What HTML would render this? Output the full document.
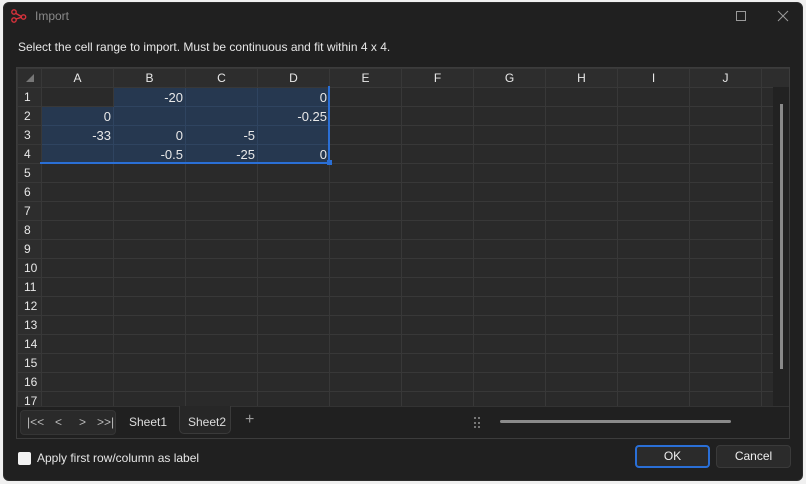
<!DOCTYPE html>
<html><head><style>
*{box-sizing:border-box;margin:0;padding:0}
body{width:806px;height:484px;background:#f0f0f0;font-family:"Liberation Sans",sans-serif;overflow:hidden;position:relative}
.win{position:absolute;left:3px;top:2px;width:800px;height:479px;background:#202020;border-radius:6px;border:1px solid #2c2c2c}
.abs{position:absolute}
.title{left:35px;top:9px;color:#8a8a8a;font-size:12px}
.msg{left:18px;top:40px;color:#e6e6e6;font-size:12px}
.grid{left:16px;top:67px;width:774px;height:372px;border:1px solid #3c3c3c;background:#2a2a2a;overflow:hidden}
table{border-collapse:collapse;table-layout:fixed;position:absolute;left:0;top:0;width:816px}
td{height:19px;border:1px solid #383838;font-size:13px;color:#e8e8e8;text-align:right;padding:0 2px;white-space:nowrap;overflow:hidden;line-height:17px}
td.h{background:#2d2d2d;text-align:center;font-size:12px}
td.r{background:#2d2d2d;text-align:left;padding-left:6px;font-size:12px}
td.s{background:#263850;border-color:#2f4460}
</style></head><body>
<div class="win"></div>
<svg class="abs" style="left:11px;top:9px" width="16" height="14" viewBox="0 0 16 14"><circle cx="3" cy="3" r="2.2" fill="none" stroke="#d8323c" stroke-width="1.4"/><circle cx="3" cy="11" r="2.2" fill="none" stroke="#d8323c" stroke-width="1.4"/><circle cx="12.5" cy="8" r="2.2" fill="none" stroke="#d8323c" stroke-width="1.4"/><path d="M5 4.5 L10.3 7.5 M5 10 L10.3 8.3" stroke="#d8323c" stroke-width="1.4"/></svg>
<div class="abs title">Import</div>
<div class="abs" style="left:736px;top:11px;width:10px;height:10px;border:1px solid #9a9a9a"></div>
<svg class="abs" style="left:777px;top:10px" width="12" height="12"><path d="M1 1L11 11M11 1L1 11" stroke="#9a9a9a" stroke-width="1"/></svg>
<div class="abs msg">Select the cell range to import. Must be continuous and fit within 4 x 4.</div>
<div class="abs grid">
<table>
<colgroup><col style="width:24px"><col style="width:72px"><col style="width:72px"><col style="width:72px"><col style="width:72px"><col style="width:72px"><col style="width:72px"><col style="width:72px"><col style="width:72px"><col style="width:72px"><col style="width:72px"><col style="width:72px"></colgroup>
<tr><td class="h"><svg width="8" height="8"><path d="M8 0L8 8L0 8Z" fill="#777"/></svg></td><td class="h">A</td><td class="h">B</td><td class="h">C</td><td class="h">D</td><td class="h">E</td><td class="h">F</td><td class="h">G</td><td class="h">H</td><td class="h">I</td><td class="h">J</td><td class="h"></td></tr>
<tr><td class="r">1</td><td></td><td class="s">-20</td><td class="s"></td><td class="s">0</td><td></td><td></td><td></td><td></td><td></td><td></td><td></td></tr>
<tr><td class="r">2</td><td class="s">0</td><td class="s"></td><td class="s"></td><td class="s">-0.25</td><td></td><td></td><td></td><td></td><td></td><td></td><td></td></tr>
<tr><td class="r">3</td><td class="s">-33</td><td class="s">0</td><td class="s">-5</td><td class="s"></td><td></td><td></td><td></td><td></td><td></td><td></td><td></td></tr>
<tr><td class="r">4</td><td class="s"></td><td class="s">-0.5</td><td class="s">-25</td><td class="s">0</td><td></td><td></td><td></td><td></td><td></td><td></td><td></td></tr>
<tr><td class="r">5</td><td></td><td></td><td></td><td></td><td></td><td></td><td></td><td></td><td></td><td></td><td></td></tr>
<tr><td class="r">6</td><td></td><td></td><td></td><td></td><td></td><td></td><td></td><td></td><td></td><td></td><td></td></tr>
<tr><td class="r">7</td><td></td><td></td><td></td><td></td><td></td><td></td><td></td><td></td><td></td><td></td><td></td></tr>
<tr><td class="r">8</td><td></td><td></td><td></td><td></td><td></td><td></td><td></td><td></td><td></td><td></td><td></td></tr>
<tr><td class="r">9</td><td></td><td></td><td></td><td></td><td></td><td></td><td></td><td></td><td></td><td></td><td></td></tr>
<tr><td class="r">10</td><td></td><td></td><td></td><td></td><td></td><td></td><td></td><td></td><td></td><td></td><td></td></tr>
<tr><td class="r">11</td><td></td><td></td><td></td><td></td><td></td><td></td><td></td><td></td><td></td><td></td><td></td></tr>
<tr><td class="r">12</td><td></td><td></td><td></td><td></td><td></td><td></td><td></td><td></td><td></td><td></td><td></td></tr>
<tr><td class="r">13</td><td></td><td></td><td></td><td></td><td></td><td></td><td></td><td></td><td></td><td></td><td></td></tr>
<tr><td class="r">14</td><td></td><td></td><td></td><td></td><td></td><td></td><td></td><td></td><td></td><td></td><td></td></tr>
<tr><td class="r">15</td><td></td><td></td><td></td><td></td><td></td><td></td><td></td><td></td><td></td><td></td><td></td></tr>
<tr><td class="r">16</td><td></td><td></td><td></td><td></td><td></td><td></td><td></td><td></td><td></td><td></td><td></td></tr>
<tr><td class="r">17</td><td></td><td></td><td></td><td></td><td></td><td></td><td></td><td></td><td></td><td></td><td></td></tr>
</table>
<div class="abs" style="left:311px;top:18px;width:2px;height:77px;background:#2a6fd6"></div>
<div class="abs" style="left:23px;top:94px;width:290px;height:2px;background:#2a6fd6"></div>
<div class="abs" style="left:310px;top:92px;width:5px;height:5px;background:#2a6fd6"></div>
<div class="abs" style="left:756px;top:19px;width:17px;height:319px;background:#222"></div>
<div class="abs" style="left:763px;top:36px;width:3px;height:265px;background:#8a8a8a"></div>
<div class="abs" style="left:0;top:338px;width:774px;height:34px;background:#202020;border-top:1px solid #333"></div>
<div class="abs" style="left:3px;top:342px;width:96px;height:25px;background:#2a2a2a;border:1px solid #353535;border-radius:4px;color:#bbb;font-size:12px;line-height:23px">
<span class="abs" style="left:6px">|&lt;&lt;</span><span class="abs" style="left:34px">&lt;</span><span class="abs" style="left:58px">&gt;</span><span class="abs" style="left:76px">&gt;&gt;|</span></div>
<div class="abs" style="left:112px;top:347px;color:#ddd;font-size:12px">Sheet1</div>
<div class="abs" style="left:162px;top:338px;width:52px;height:28px;background:#272727;border:1px solid #3a3a3a;border-top:none;border-radius:0 0 5px 5px;color:#ddd;font-size:12px;padding:9px 0 0 8px">Sheet2</div>
<div class="abs" style="left:228px;top:343px;color:#999;font-size:16px">+</div>
<div class="abs" style="left:457px;top:349px;height:11px;border-left:2px dotted #777;border-right:2px dotted #777;width:6px"></div>
<div class="abs" style="left:483px;top:352px;width:231px;height:3px;background:#8a8a8a;border-radius:2px"></div>
</div>
<div class="abs" style="left:18px;top:452px;width:13px;height:13px;background:#f2f2f2;border-radius:2px"></div>
<div class="abs" style="left:37px;top:451px;color:#e6e6e6;font-size:12px">Apply first row/column as label</div>
<div class="abs" style="left:635px;top:445px;width:75px;height:23px;border:2px solid #2a6fd6;border-radius:4px;background:#2b2b2b;color:#eee;font-size:12px;text-align:center;line-height:19px">OK</div>
<div class="abs" style="left:716px;top:445px;width:75px;height:23px;border:1px solid #3a3a3a;border-radius:4px;background:#2b2b2b;color:#eee;font-size:12px;text-align:center;line-height:21px">Cancel</div>
</body></html>
